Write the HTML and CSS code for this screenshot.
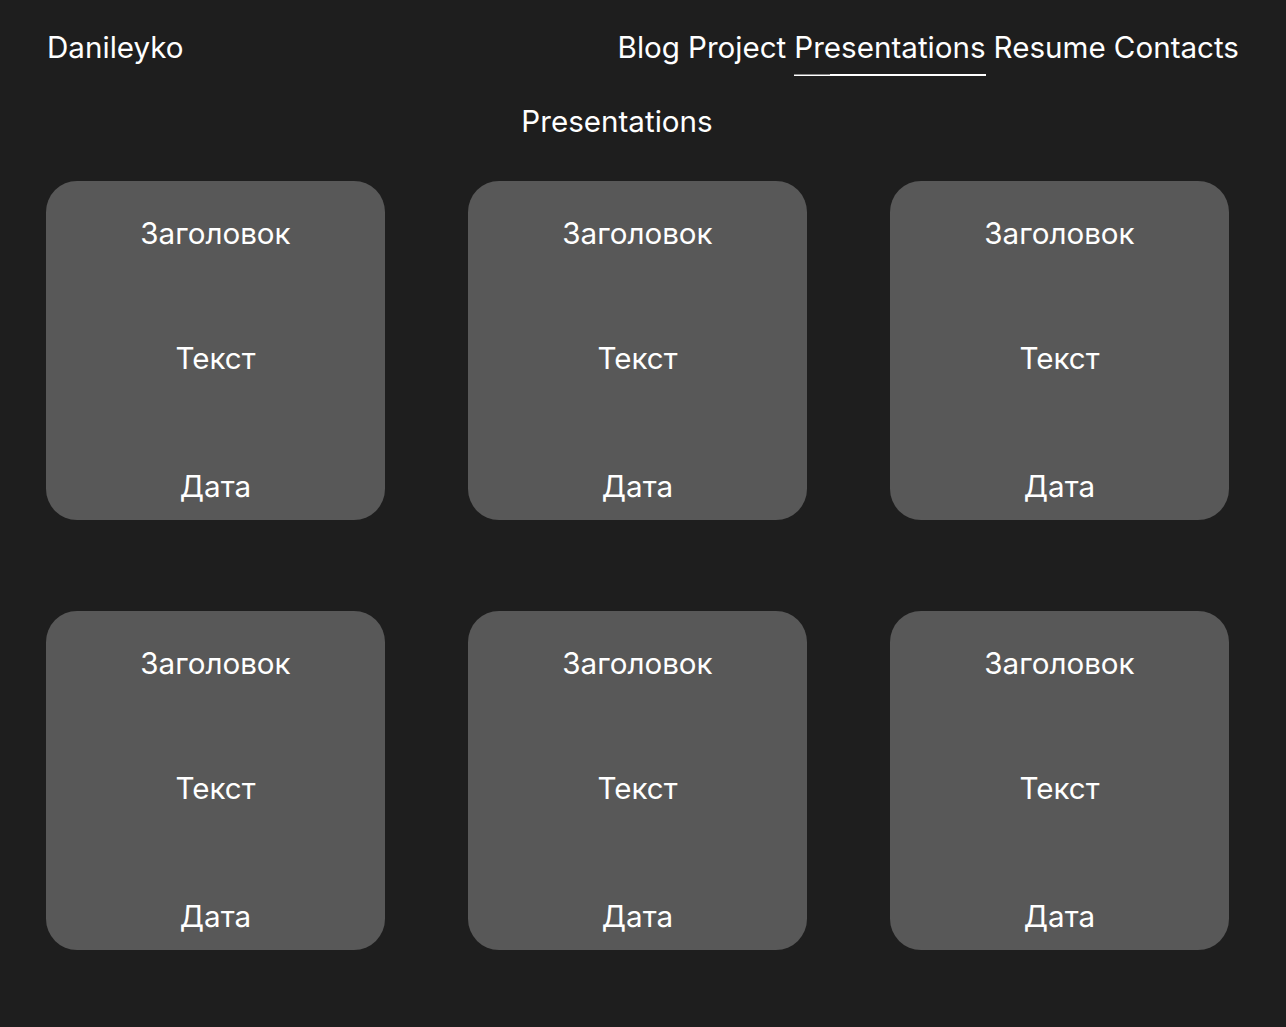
FILE: index.html
```html
<!DOCTYPE html>
<html lang="ru">
<head>
<meta charset="utf-8">
<title>Presentations</title>
<link rel="stylesheet" href="styles.css">
</head>
<body>
<header class="header">
  <div class="logo">Danileyko</div>
  <nav class="nav">
    <a class="nav-link" href="#">Blog</a>
    <a class="nav-link" href="#">Project</a>
    <a class="nav-link active" href="#">Presentations</a>
    <a class="nav-link" href="#">Resume</a>
    <a class="nav-link" href="#">Contacts</a>
  </nav>
</header>
<main class="main">
  <h1 class="title">Presentations</h1>
  <div class="grid">
    <div class="card"><div class="card-title">Заголовок</div><div class="card-text">Текст</div><div class="card-date">Дата</div></div>
    <div class="card"><div class="card-title">Заголовок</div><div class="card-text">Текст</div><div class="card-date">Дата</div></div>
    <div class="card"><div class="card-title">Заголовок</div><div class="card-text">Текст</div><div class="card-date">Дата</div></div>
    <div class="card"><div class="card-title">Заголовок</div><div class="card-text">Текст</div><div class="card-date">Дата</div></div>
    <div class="card"><div class="card-title">Заголовок</div><div class="card-text">Текст</div><div class="card-date">Дата</div></div>
    <div class="card"><div class="card-title">Заголовок</div><div class="card-text">Текст</div><div class="card-date">Дата</div></div>
  </div>
</main>
</body>
</html>
```
FILE: styles.css
```css
* { box-sizing: border-box; }
html, body { margin: 0; padding: 0; }
body {
  background: #1e1e1e;
  color: #ffffff;
  font-family: Inter, "Noto Sans", sans-serif;
  font-size: 29.6px;
  font-weight: 400;
  line-height: 1.2;
  min-height: 1027px;
}
.header {
  display: flex;
  justify-content: space-between;
  align-items: flex-start;
  padding: 30px 47px 0 47px;
  height: 104px;
}
.nav { display: flex; gap: 8px; }
.nav-link {
  color: #fff;
  text-decoration: none;
  display: block;
  padding-bottom: 8px;
  position: relative;
}
.nav-link.active::after {
  content: "";
  position: absolute;
  left: 0;
  right: 0;
  bottom: -2px;
  height: 2px;
  background: #fff;
}
.nav-link.active::before {
  content: "";
  position: absolute;
  left: 0;
  width: 36px;
  bottom: -1px;
  height: 1px;
  background: #8a8a8a;
  z-index: 1;
}
.main { padding: 0 57px 0 46px; }
.title {
  margin: 0;
  font-weight: 400;
  font-size: 29.6px;
  text-align: center;
  padding-right: 41px;
}
.grid {
  margin-top: 41px;
  display: grid;
  grid-template-columns: repeat(3, 339px);
  column-gap: 83px;
  row-gap: 91px;
}
.card {
  background: #585858;
  border-radius: 31px;
  height: 339px;
  display: flex;
  flex-direction: column;
  align-items: center;
  padding: 35px 0 15px;
}
.card-text { margin-top: 90px; }
.card-date { margin-top: auto; }
```
